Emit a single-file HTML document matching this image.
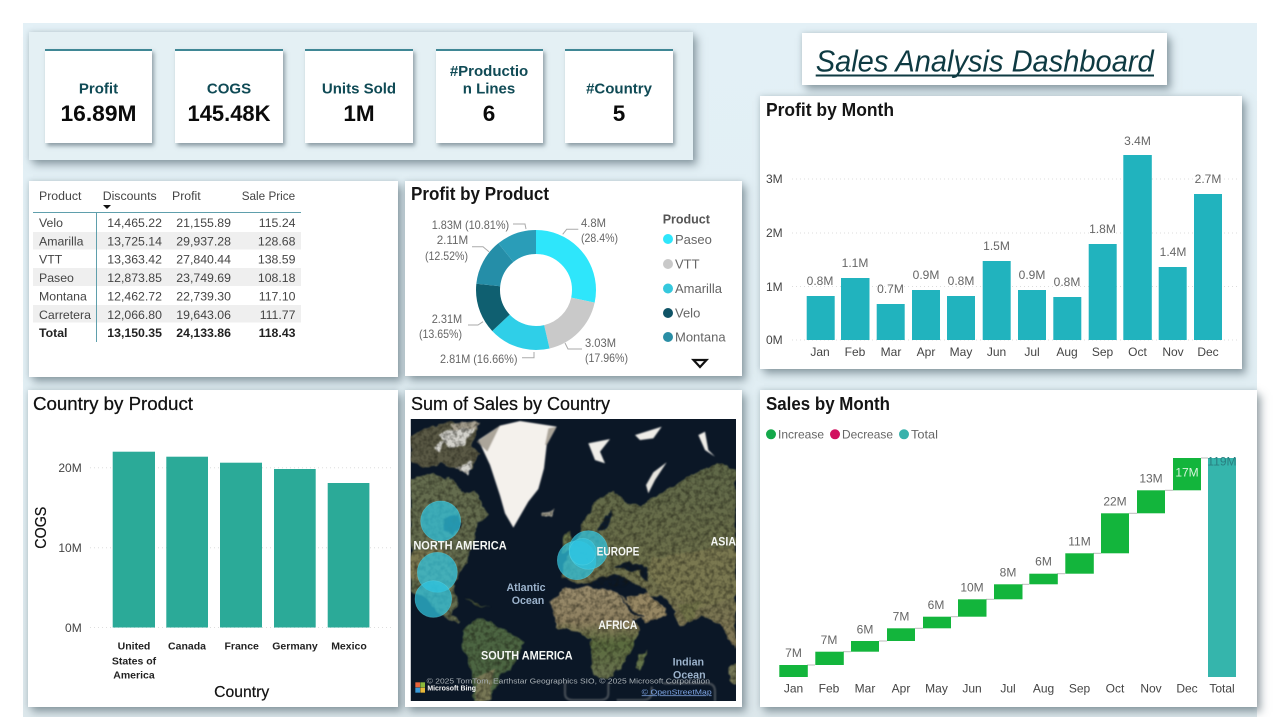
<!DOCTYPE html>
<html lang="en">
<head>
<meta charset="utf-8">
<title>Sales Analysis Dashboard</title>
<style>
html,body{margin:0;padding:0;background:#fff;}
body{width:1280px;height:717px;position:relative;overflow:hidden;font-family:"Liberation Sans",sans-serif;}
.bg{position:absolute;left:23px;top:23px;width:1234px;height:694px;background:linear-gradient(#e3f0f6 0,#e1eef3 60%,#dde8ec 100%);}
.p{position:absolute;background:#fff;box-shadow:4px 5px 8px rgba(70,90,100,.5),0 0 5px rgba(90,110,120,.25);}
.kpi{background:#e4f0f4;}
.c{border-top:2px solid #3f8795;box-sizing:border-box;background:#fff;box-shadow:2px 3px 4px rgba(70,90,100,.55);}
svg.o{position:absolute;left:0;top:0;filter:blur(.35px);}
text{font-family:"Liberation Sans",sans-serif;}
.k{font-size:15px;font-weight:700;fill:#0f4a55;text-anchor:middle;}
.v{font-size:22.5px;font-weight:700;fill:#0a0a0a;text-anchor:middle;}
.t{font-size:18px;font-weight:700;fill:#151515;}
.t2{font-size:18px;fill:#111;stroke:#111;stroke-width:.25px;}
.g{font-size:12px;fill:#666;}
.m{font-size:12px;fill:#444;text-anchor:middle;}
.l{font-size:12px;fill:#666;text-anchor:middle;}
.a{font-size:12px;fill:#444;}
.r{font-size:12.3px;fill:#444;}
.n{font-size:12.3px;fill:#444;text-anchor:end;}
.tb{font-size:12.3px;fill:#222;font-weight:700;}
.tn{font-size:12.3px;fill:#222;font-weight:700;text-anchor:end;}
.d{font-size:12px;fill:#666;}
.lg{font-size:13px;fill:#666;}
.x{font-size:10.5px;font-weight:700;fill:#222;text-anchor:middle;}
.ml{font-weight:700;fill:#f4f6f4;font-size:36px;}
.oc{font-weight:700;fill:#9cb3cc;font-size:32px;text-anchor:middle;}
</style>
</head>
<body>
<div class="bg"></div>
<div class="p kpi" style="left:29px;top:32px;width:664px;height:128px"></div>
<div class="p c" style="left:45px;top:49px;width:107px;height:94px"></div>
<div class="p c" style="left:175px;top:49px;width:108px;height:94px"></div>
<div class="p c" style="left:305px;top:49px;width:108px;height:94px"></div>
<div class="p c" style="left:436px;top:49px;width:107px;height:94px"></div>
<div class="p c" style="left:565px;top:49px;width:108px;height:94px"></div>
<div class="p" style="left:802px;top:33px;width:365px;height:52px"></div>
<div class="p" style="left:760px;top:96px;width:482px;height:273px"></div>
<div class="p" style="left:29px;top:181px;width:369px;height:196px"></div>
<div class="p" style="left:405px;top:181px;width:337px;height:195px"></div>
<div class="p" style="left:28px;top:390px;width:370px;height:317px"></div>
<div class="p" style="left:405px;top:390px;width:337px;height:317px"></div>
<div class="p" style="left:760px;top:390px;width:497px;height:317px"></div>

<svg class="o" width="1280" height="717" viewBox="0 0 1280 717" xmlns="http://www.w3.org/2000/svg">
<!-- KPI -->
<text class="k" x="98.5" y="93.5">Profit</text>
<text class="v" x="98.5" y="121" textLength="76" lengthAdjust="spacingAndGlyphs">16.89M</text>
<text class="k" x="229" y="93.5">COGS</text>
<text class="v" x="229" y="121" textLength="83" lengthAdjust="spacingAndGlyphs">145.48K</text>
<text class="k" x="359" y="93.5">Units Sold</text>
<text class="v" x="359" y="121">1M</text>
<text class="k" x="489" y="76">#Productio</text>
<text class="k" x="489" y="93.5">n Lines</text>
<text class="v" x="489" y="121">6</text>
<text class="k" x="619" y="93.5">#Country</text>
<text class="v" x="619" y="121">5</text>

<!-- Title -->
<text x="815.7" y="71.5" font-size="31" font-style="italic" fill="#0e3a42" textLength="338" lengthAdjust="spacingAndGlyphs">Sales Analysis Dashboard</text>
<line x1="815.7" y1="75.5" x2="1154" y2="75.5" stroke="#0e3a42" stroke-width="2"/>

<!-- Profit by Month -->
<text class="t" x="766" y="116" textLength="128" lengthAdjust="spacingAndGlyphs">Profit by Month</text>
<g stroke="#dcdcdc" stroke-dasharray="1 3" stroke-width="1">
<line x1="792" y1="179" x2="1238" y2="179"/><line x1="792" y1="233" x2="1238" y2="233"/><line x1="792" y1="286.5" x2="1238" y2="286.5"/><line x1="792" y1="340" x2="1238" y2="340"/>
</g>
<text class="a" x="766" y="183">3M</text><text class="a" x="766" y="237">2M</text><text class="a" x="766" y="291">1M</text><text class="a" x="766" y="344">0M</text>
<g fill="#21b3be">
<rect x="806.7" y="296" width="28" height="44"/><rect x="841" y="278" width="28.5" height="62"/><rect x="876.7" y="304" width="28" height="36"/><rect x="912" y="290" width="28" height="50"/><rect x="947" y="296" width="28" height="44"/><rect x="982.7" y="261" width="28" height="79"/><rect x="1018" y="290" width="28" height="50"/><rect x="1053.3" y="297" width="28" height="43"/><rect x="1088.7" y="244" width="28" height="96"/><rect x="1123.3" y="155" width="28.5" height="185"/><rect x="1158.7" y="267" width="28" height="73"/><rect x="1194" y="194" width="28" height="146"/>
</g>
<text class="l" x="820" y="285">0.8M</text><text class="l" x="855" y="267">1.1M</text><text class="l" x="890.5" y="293">0.7M</text><text class="l" x="926" y="279">0.9M</text><text class="l" x="961" y="285">0.8M</text><text class="l" x="996.5" y="250">1.5M</text><text class="l" x="1032" y="279">0.9M</text><text class="l" x="1067" y="286">0.8M</text><text class="l" x="1102.5" y="233">1.8M</text><text class="l" x="1137.5" y="145">3.4M</text><text class="l" x="1173" y="256">1.4M</text><text class="l" x="1208" y="183">2.7M</text>
<text class="m" x="820" y="356">Jan</text><text class="m" x="855" y="356">Feb</text><text class="m" x="891" y="356">Mar</text><text class="m" x="926" y="356">Apr</text><text class="m" x="961" y="356">May</text><text class="m" x="996.5" y="356">Jun</text><text class="m" x="1032" y="356">Jul</text><text class="m" x="1067" y="356">Aug</text><text class="m" x="1102.5" y="356">Sep</text><text class="m" x="1137.5" y="356">Oct</text><text class="m" x="1173" y="356">Nov</text><text class="m" x="1208" y="356">Dec</text>

<!-- Table -->
<rect x="33" y="232" width="268" height="17.5" fill="#efefef"/>
<rect x="33" y="268" width="268" height="18" fill="#efefef"/>
<rect x="33" y="305" width="268" height="17.5" fill="#efefef"/>
<line x1="33" y1="212.5" x2="301" y2="212.5" stroke="#5f9fac"/>
<line x1="96.5" y1="212" x2="96.5" y2="342" stroke="#5f9fac"/>
<text class="r" x="39" y="200">Product</text><text class="r" x="102.7" y="200">Discounts</text><text class="r" x="172" y="200">Profit</text><text class="r" x="241.7" y="200" textLength="53.5" lengthAdjust="spacingAndGlyphs">Sale Price</text>
<path d="M103 205h8l-4 4z" fill="#111"/>
<text class="r" x="39" y="227">Velo</text><text class="n" x="162" y="227">14,465.22</text><text class="n" x="231" y="227">21,155.89</text><text class="n" x="295.5" y="227">115.24</text>
<text class="r" x="39" y="245.5">Amarilla</text><text class="n" x="162" y="245.5">13,725.14</text><text class="n" x="231" y="245.5">29,937.28</text><text class="n" x="295.5" y="245.5">128.68</text>
<text class="r" x="39" y="263.5">VTT</text><text class="n" x="162" y="263.5">13,363.42</text><text class="n" x="231" y="263.5">27,840.44</text><text class="n" x="295.5" y="263.5">138.59</text>
<text class="r" x="39" y="282">Paseo</text><text class="n" x="162" y="282">12,873.85</text><text class="n" x="231" y="282">23,749.69</text><text class="n" x="295.5" y="282">108.18</text>
<text class="r" x="39" y="300.5">Montana</text><text class="n" x="162" y="300.5">12,462.72</text><text class="n" x="231" y="300.5">22,739.30</text><text class="n" x="295.5" y="300.5">117.10</text>
<text class="r" x="39" y="319">Carretera</text><text class="n" x="162" y="319">12,066.80</text><text class="n" x="231" y="319">19,643.06</text><text class="n" x="295.5" y="319">111.77</text>
<text class="tb" x="39" y="337">Total</text><text class="tn" x="162" y="337">13,150.35</text><text class="tn" x="231" y="337">24,133.86</text><text class="tn" x="295.5" y="337">118.43</text>

<!-- Donut -->
<text class="t" x="411" y="200" textLength="138" lengthAdjust="spacingAndGlyphs">Profit by Product</text>
<g fill="none" stroke-width="24" transform="rotate(-90 536 290)">
<circle cx="536" cy="290" r="48" pathLength="100" stroke="#2ee6fb" stroke-dasharray="28.4 71.6"/>
<circle cx="536" cy="290" r="48" pathLength="100" stroke="#c9c9c9" stroke-dasharray="17.96 82.04" stroke-dashoffset="-28.4"/>
<circle cx="536" cy="290" r="48" pathLength="100" stroke="#2fcfe8" stroke-dasharray="16.66 83.34" stroke-dashoffset="-46.36"/>
<circle cx="536" cy="290" r="48" pathLength="100" stroke="#0f5f70" stroke-dasharray="13.65 86.35" stroke-dashoffset="-63.02"/>
<circle cx="536" cy="290" r="48" pathLength="100" stroke="#258ea8" stroke-dasharray="12.52 87.48" stroke-dashoffset="-76.67"/>
<circle cx="536" cy="290" r="48" pathLength="100" stroke="#2a9db8" stroke-dasharray="10.81 89.19" stroke-dashoffset="-89.19"/>
</g>
<g fill="none" stroke="#aaa" stroke-width="1">
<path d="M562.7 234.3L566.7 229.3H578.3"/><path d="M513 224H525L526 229"/><path d="M472 246.7H483L489 251.7"/><path d="M468 325H478L483 321.7"/><path d="M522 357.7H534V352"/><path d="M582 349H568L565 343"/>
</g>
<text class="d" x="581" y="227" textLength="25" lengthAdjust="spacingAndGlyphs">4.8M</text><text class="d" x="581" y="242" textLength="37" lengthAdjust="spacingAndGlyphs">(28.4%)</text>
<text class="d" x="431.7" y="229" textLength="77.5" lengthAdjust="spacingAndGlyphs">1.83M (10.81%)</text>
<text class="d" x="436.7" y="244" textLength="31.5" lengthAdjust="spacingAndGlyphs">2.11M</text><text class="d" x="425" y="260" textLength="43" lengthAdjust="spacingAndGlyphs">(12.52%)</text>
<text class="d" x="431.7" y="323" textLength="30.5" lengthAdjust="spacingAndGlyphs">2.31M</text><text class="d" x="419" y="338" textLength="43" lengthAdjust="spacingAndGlyphs">(13.65%)</text>
<text class="d" x="440" y="363" textLength="77.5" lengthAdjust="spacingAndGlyphs">2.81M (16.66%)</text>
<text class="d" x="585" y="347" textLength="31" lengthAdjust="spacingAndGlyphs">3.03M</text><text class="d" x="585" y="362" textLength="43" lengthAdjust="spacingAndGlyphs">(17.96%)</text>
<text x="662.7" y="223.5" font-size="12.5" font-weight="700" fill="#555">Product</text>
<circle cx="668" cy="239" r="5" fill="#2ee6fb"/><text class="lg" x="675" y="244">Paseo</text>
<circle cx="668" cy="264" r="5" fill="#c9c9c9"/><text class="lg" x="675" y="268.5">VTT</text>
<circle cx="668" cy="288.5" r="5" fill="#35c8dd"/><text class="lg" x="675" y="293">Amarilla</text>
<circle cx="668" cy="313" r="5" fill="#0f5366"/><text class="lg" x="675" y="317.5">Velo</text>
<circle cx="668" cy="337" r="5" fill="#2a8ea5"/><text class="lg" x="675" y="341.5">Montana</text>
<path d="M693.5 360h13l-6.500 7z" fill="#fff" stroke="#111" stroke-width="2.200"/>

<!-- Country by Product -->
<text class="t2" x="33" y="410" textLength="160" lengthAdjust="spacingAndGlyphs">Country by Product</text>
<g stroke="#dedede" stroke-dasharray="1 3"><line x1="90" y1="467.700" x2="392" y2="467.700"/><line x1="90" y1="547.700" x2="392" y2="547.700"/><line x1="90" y1="627.500" x2="392" y2="627.500"/></g>
<g fill="#2baa98">
<rect x="112.700" y="451.700" width="42.300" height="175.800"/><rect x="166.300" y="456.700" width="41.700" height="170.800"/><rect x="220" y="462.700" width="42" height="164.800"/><rect x="274" y="469" width="41.700" height="158.500"/><rect x="327.700" y="483" width="41.700" height="144.500"/>
</g>
<text class="a" x="81.700" y="472" text-anchor="end">20M</text><text class="a" x="81.700" y="552" text-anchor="end">10M</text><text class="a" x="81.700" y="632" text-anchor="end">0M</text>
<text x="46" y="527.700" transform="rotate(-90 46 527.700)" font-size="15.500" fill="#111" stroke="#111" stroke-width=".2" text-anchor="middle" textLength="42" lengthAdjust="spacingAndGlyphs">COGS</text>
<text class="x" x="134" y="649.500">United</text><text class="x" x="134" y="664.500">States of</text><text class="x" x="134" y="678.500">America</text>
<text class="x" x="187" y="649.500">Canada</text><text class="x" x="241.700" y="649.500">France</text><text class="x" x="295" y="649.500">Germany</text><text class="x" x="349" y="649.500">Mexico</text>
<text x="241.700" y="697" font-size="15.500" fill="#111" stroke="#111" stroke-width=".2" text-anchor="middle" textLength="55" lengthAdjust="spacingAndGlyphs">Country</text>

<!-- Map -->
<text class="t2" x="411" y="410" textLength="199" lengthAdjust="spacingAndGlyphs">Sum of Sales by Country</text>
<defs><clipPath id="mc"><rect x="32" y="102" width="976" height="846"/></clipPath>
<linearGradient id="af" x1="0" y1="0" x2="0" y2="1"><stop offset="0" stop-color="#9a8c6c"/><stop offset=".38" stop-color="#8e8060"/><stop offset=".62" stop-color="#5a6b3e"/><stop offset="1" stop-color="#6a7250"/></linearGradient>
<linearGradient id="eu" x1="0" y1="0" x2="0" y2="1"><stop offset="0" stop-color="#5f6848"/><stop offset=".55" stop-color="#6c6f4a"/><stop offset="1" stop-color="#837857"/></linearGradient>
<filter id="land" x="-5%" y="-5%" width="110%" height="110%" color-interpolation-filters="sRGB">
<feTurbulence type="fractalNoise" baseFrequency=".035" numOctaves="3" seed="4" result="n"/>
<feDisplacementMap in="SourceGraphic" in2="n" scale="20" xChannelSelector="R" yChannelSelector="G" result="d"/>
<feGaussianBlur in="d" stdDeviation="2.500" result="b"/>
<feTurbulence type="fractalNoise" baseFrequency=".07" numOctaves="2" seed="9" result="t"/>
<feColorMatrix in="t" type="matrix" values="0 0 0 0 .08  0 0 0 0 .08  0 0 0 0 .05  1.1 0 0 0 -.42" result="sp"/>
<feComposite in="sp" in2="b" operator="in" result="spc"/>
<feMerge><feMergeNode in="b"/><feMergeNode in="spc"/></feMerge>
</filter>
<filter id="soft"><feGaussianBlur stdDeviation="2"/></filter>
</defs>
<g transform="translate(400 385) scale(.33333)">
<g clip-path="url(#mc)">
<rect x="32" y="102" width="976" height="846" fill="#0b1726"/>
<g filter="url(#land)">
<!-- arctic Canada -->
<path d="M32 150L140 110L235 125L215 180L240 205L200 265L130 235L70 250L32 235Z" fill="#5a5945"/>
<path d="M120 145L180 125L225 130L195 175L150 190ZM170 250L215 225L205 270ZM135 165L100 185L120 205Z" fill="#d2d1cb"/>
<path d="M145 118L240 108L228 130L165 135Z" fill="#a7a090"/>
<!-- North America -->
<path d="M32 280L100 265L160 290L190 325L222 320L252 372L265 392L232 418L222 470L200 525L175 570L160 612L178 655L150 692L185 705L178 715L120 690L80 640L32 620Z" fill="#646c4e"/>
<path d="M32 500L130 490L160 560L150 610L100 600L32 580Z" fill="#7a7750"/>
<path d="M130 400L175 385L185 420L160 450L135 435Z" fill="#0e2030"/>
<path d="M190 640L230 655L270 672L225 660Z" fill="#4e5a3c"/>
<!-- South America -->
<path d="M188 735L240 695L300 730L372 770L350 830L300 872L272 948L225 948L215 850L185 780Z" fill="#4c6542"/>
<path d="M225 880L285 850L272 948L228 948Z" fill="#777755"/>
<!-- Iceland -->
<path d="M420 382L462 374L456 394L432 398Z" fill="#a9a698"/>
<!-- Eurasia -->
<path d="M545 425L590 345L640 320L682 360L722 362L800 312L868 272L950 235L1008 255V790L960 720L905 690L868 712L842 722L800 640L742 625L700 590L650 592L600 585L560 600L520 590L485 575L490 540L530 470Z" fill="url(#eu)"/>
<path d="M760 520L1008 480V640L900 670L800 620L740 560Z" fill="#7a7850"/>
<path d="M490 455L510 440L520 490L490 505Z" fill="#6a754a"/>
<path d="M590 432L615 395L640 372L632 410L615 440Z" fill="#0c1a2a"/>
<path d="M565 598L610 575L660 570L700 590L660 605L600 600Z" fill="#0b1726"/>
<path d="M645 545L690 530L735 548L690 562Z" fill="#0b1726"/>
<path d="M720 550L740 545L745 590L725 580Z" fill="#0b1726"/>
<!-- Africa -->
<path d="M450 650L490 612L570 605L640 618L690 650L752 692L700 702L722 732L662 852L622 882L580 872L570 762L530 737L470 730Z" fill="url(#af)"/>
<!-- Arabia -->
<path d="M680 635L745 625L795 665L800 690L735 715L700 680Z" fill="#978763"/>
<path d="M660 635L700 685L730 700L700 680Z" fill="#0b1726" stroke="#0b1726" stroke-width="3"/>
<path d="M830 660L905 650L870 715L850 700Z" fill="#707248"/>
<path d="M720 810L742 795L720 855L702 850Z" fill="#65754b"/>
<path d="M990 850L1008 835V900L990 890Z" fill="#767958"/>
</g>
<g filter="url(#soft)">
<!-- Greenland -->
<path d="M235 165L300 122L360 108L470 125L440 180L432 250L415 312L385 350L340 428L315 385L300 332L270 240Z" fill="#f4f1ec"/>
<path d="M435 180L445 130L470 125L440 180ZM300 122L230 170L262 200Z" fill="#8c8577" opacity=".7"/>
<!-- Arctic islands -->
<path d="M565 175L630 162L600 200L615 235L585 225ZM705 150L785 125L760 160L720 165ZM895 150L915 140L925 195L945 215L915 195Z" fill="#efede8"/>
<path d="M800 232L760 262L738 300L745 325L765 285Z" fill="#e7e5df"/>
</g>
<!-- Bubbles -->
<g fill="#2fc5e0" fill-opacity=".72" stroke="#5ad6e8" stroke-opacity=".5" stroke-width="2">
<circle cx="122" cy="408" r="60"/><circle cx="112" cy="562" r="60"/><circle cx="100" cy="642" r="55"/>
<circle cx="530" cy="526" r="58"/><circle cx="565" cy="495" r="58"/><circle cx="548" cy="500" r="40"/>
</g>
<!-- watermark -->
<path d="M495 892V925Q495 945 520 945H600Q625 945 625 925V892M650 945H730Q755 945 755 920V905M790 895H920Q945 895 945 920V948" fill="none" stroke="#6f7478" stroke-width="7" opacity=".55" filter="url(#soft)"/>
<!-- Labels -->
<text class="ml" x="40" y="494" textLength="280" lengthAdjust="spacingAndGlyphs">NORTH AMERICA</text>
<text class="ml" x="590" y="512" textLength="128" lengthAdjust="spacingAndGlyphs">EUROPE</text>
<text class="ml" x="932" y="482" textLength="76" lengthAdjust="spacingAndGlyphs">ASIA</text>
<text class="ml" x="595" y="732" textLength="117" lengthAdjust="spacingAndGlyphs">AFRICA</text>
<text class="ml" x="243" y="824" textLength="275" lengthAdjust="spacingAndGlyphs">SOUTH AMERICA</text>
<text class="oc" x="378" y="618">Atlantic</text><text class="oc" x="384" y="657">Ocean</text>
<text class="oc" x="865" y="842">Indian</text><text class="oc" x="868" y="881">Ocean</text>
<text x="80" y="896" font-size="23" fill="#a9b0b5" textLength="850" lengthAdjust="spacingAndGlyphs">© 2025 TomTom, Earthstar Geographics SIO, © 2025 Microsoft Corporation</text>
<g><rect x="46" y="892" width="14" height="15" fill="#e8643a"/><rect x="61" y="892" width="14" height="15" fill="#8ab83a"/><rect x="46" y="908" width="14" height="15" fill="#3a9ad8"/><rect x="61" y="908" width="14" height="15" fill="#e8b93a"/></g>
<text x="82" y="916" font-size="23" font-weight="700" fill="#f2f2f2" textLength="146" lengthAdjust="spacingAndGlyphs">Microsoft Bing</text>
<text x="725" y="928" font-size="23" fill="#7fa6e6" text-decoration="underline" textLength="210" lengthAdjust="spacingAndGlyphs">© OpenStreetMap</text>
</g>
</g>

<!-- Sales by Month -->
<text class="t" x="766" y="410" textLength="124" lengthAdjust="spacingAndGlyphs">Sales by Month</text>
<circle cx="771" cy="434.300" r="5" fill="#14a84a"/><text class="g" x="778" y="438.500" textLength="46" lengthAdjust="spacingAndGlyphs">Increase</text>
<circle cx="835" cy="434.300" r="5" fill="#d1105f"/><text class="g" x="842" y="438.500" textLength="51" lengthAdjust="spacingAndGlyphs">Decrease</text>
<circle cx="904" cy="434.300" r="5" fill="#38b2ac"/><text class="g" x="911" y="438.500" textLength="27" lengthAdjust="spacingAndGlyphs">Total</text>
<g stroke="#bbb" stroke-width="1"><line x1="807" y1="665" x2="815" y2="665"/><line x1="843" y1="651.700" x2="851" y2="651.700"/><line x1="879" y1="641" x2="887" y2="641"/><line x1="915" y1="628.300" x2="923" y2="628.300"/><line x1="951" y1="616.700" x2="958" y2="616.700"/><line x1="986" y1="599.300" x2="994" y2="599.300"/><line x1="1022" y1="584.300" x2="1029" y2="584.300"/><line x1="1057" y1="573.700" x2="1065" y2="573.700"/><line x1="1093" y1="553.300" x2="1101" y2="553.300"/><line x1="1129" y1="513.300" x2="1137" y2="513.300"/><line x1="1165" y1="490.300" x2="1173" y2="490.300"/><line x1="1201" y1="458" x2="1208" y2="458"/></g>
<g fill="#13b53c">
<rect x="779.300" y="665" width="28.500" height="12"/><rect x="815.300" y="651.700" width="28.500" height="13.300"/><rect x="851" y="641" width="28" height="10.700"/><rect x="887" y="628.300" width="28" height="12.700"/><rect x="923" y="616.700" width="28" height="11.600"/><rect x="958" y="599.300" width="28.500" height="17.400"/><rect x="994" y="584.300" width="28.500" height="15"/><rect x="1029.300" y="573.700" width="28.500" height="10.600"/><rect x="1065.300" y="553.300" width="28.500" height="20.400"/><rect x="1101" y="513.300" width="28" height="40"/><rect x="1137" y="490.300" width="28" height="23"/><rect x="1173" y="458" width="28" height="32.300"/>
</g>
<rect x="1208" y="458" width="28" height="219" fill="#35b5ac"/>
<text class="l" x="793.500" y="657">7M</text><text class="l" x="829" y="644">7M</text><text class="l" x="865" y="633.300">6M</text><text class="l" x="901" y="620.300">7M</text><text class="l" x="936" y="609">6M</text><text class="l" x="972" y="591.700">10M</text><text class="l" x="1008" y="576.700">8M</text><text class="l" x="1043.500" y="565.700">6M</text><text class="l" x="1079.500" y="545.700">11M</text><text class="l" x="1115" y="505.300">22M</text><text class="l" x="1151" y="482.300">13M</text>
<text x="1187" y="476.700" font-size="12" fill="#d8f5dd" text-anchor="middle">17M</text>
<text x="1222" y="465.700" font-size="12" fill="#2a7f80" text-anchor="middle">119M</text>
<text class="m" x="793.500" y="692.700">Jan</text><text class="m" x="829" y="692.700">Feb</text><text class="m" x="865" y="692.700">Mar</text><text class="m" x="901" y="692.700">Apr</text><text class="m" x="936.500" y="692.700">May</text><text class="m" x="972" y="692.700">Jun</text><text class="m" x="1008" y="692.700">Jul</text><text class="m" x="1043.500" y="692.700">Aug</text><text class="m" x="1079.500" y="692.700">Sep</text><text class="m" x="1115" y="692.700">Oct</text><text class="m" x="1151" y="692.700">Nov</text><text class="m" x="1187" y="692.700">Dec</text><text class="m" x="1222" y="692.700">Total</text>
</svg>
</body>
</html>
